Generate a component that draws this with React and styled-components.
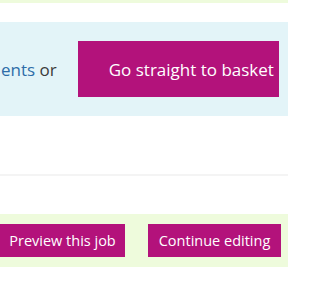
import React from 'react'
import styled, { createGlobalStyle } from 'styled-components'

const GlobalStyle = createGlobalStyle`
  body {
    margin: 0;
    background: #fff;
    font-family: "Open Sans", "Liberation Sans", sans-serif;
    width: 288px;
    overflow: hidden;
  }
`

const Page = styled.div`
  display: flex;
  flex-direction: column;
  width: 288px;
  height: 288px;
  overflow: hidden;
`

const TopStrip = styled.div`
  height: 3px;
  background: #eefbdc;
  margin-bottom: 19px;
`

const BasketPanel = styled.section`
  display: flex;
  align-items: center;
  height: 94px;
  background: #e3f4f8;
  white-space: nowrap;
`

const Lead = styled.p`
  margin: 0 21px 0 1px;
  font-size: 17px;
  color: #3b3b3b;
  a {
    color: #2e6da8;
    text-decoration: none;
  }
`

const BigButton = styled.button`
  flex: none;
  width: 201px;
  height: 56px;
  padding: 0 0 0 31px;
  border: 0;
  background: #b3127b;
  color: #fff;
  font: 17px "Open Sans", "Liberation Sans", sans-serif;
  text-align: left;
  white-space: nowrap;
`

const Divider = styled.hr`
  margin: 58px 0 0;
  border: 0;
  height: 2px;
  background: #f4f4f4;
`

const ActionBar = styled.div`
  display: flex;
  gap: 23px;
  margin-top: 38px;
  height: 53px;
  padding-top: 10px;
  box-sizing: border-box;
  background: #eefbdc;
`

const SmallButton = styled.button`
  flex: none;
  width: ${p => p.$width}px;
  height: 33px;
  padding: 0;
  border: 0;
  background: #b3127b;
  color: #fff;
  font: 14.5px "Open Sans", "Liberation Sans", sans-serif;
  text-align: center;
  white-space: nowrap;
`

const App = () => (
  <Page>
    <GlobalStyle />
    <TopStrip />
    <BasketPanel>
      <Lead>
        <a href="#">ents</a> or
      </Lead>
      <BigButton>Go straight to basket</BigButton>
    </BasketPanel>
    <Divider />
    <ActionBar>
      <SmallButton $width={125}>Preview this job</SmallButton>
      <SmallButton $width={133}>Continue editing</SmallButton>
    </ActionBar>
  </Page>
)

export default App
